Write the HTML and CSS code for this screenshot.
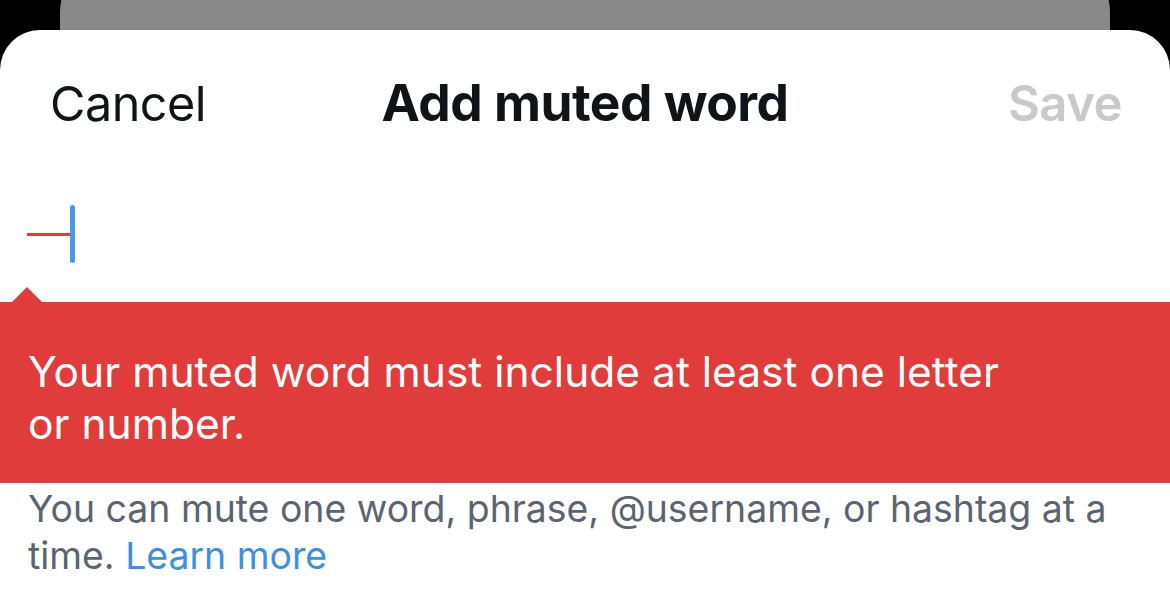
FILE: index.html
```html
<!DOCTYPE html>
<html>
<head>
<meta charset="utf-8">
<link rel="stylesheet" href="styles.css">
</head>
<body>
<div class="screen">
  <div class="back-card"></div>
  <div class="sheet">
    <div class="header">
      <span class="cancel">Cancel</span>
      <span class="title">Add muted word</span>
      <span class="save">Save</span>
    </div>
    <div class="input-row">
      <span class="dash"></span><span class="caret"></span>
    </div>
    <div class="error">
      <span class="arrow"></span>
      <p class="error-text">Your muted word must include at least one letter<br>or number.</p>
    </div>
    <p class="help">You can mute one word, phrase, @username, or hashtag at a time. <span class="link">Learn more</span></p>
  </div>
</div>
</body>
</html>
```

FILE: styles.css
```css
html, body {
  margin: 0;
  padding: 0;
  background: #000;
}
.screen {
  width: 1170px;
  height: 589px;
  overflow: hidden;
  position: relative;
  background: #000;
  font-family: Inter, "Noto Sans", sans-serif;
}
.back-card {
  position: absolute;
  left: 60px;
  right: 60px;
  top: -40px;
  height: 120px;
  background: #898989;
  border-radius: 52px;
}
.sheet {
  position: absolute;
  left: 0;
  right: 0;
  top: 30px;
  bottom: 0;
  background: #fff;
  border-radius: 40px 40px 0 0;
}
.header {
  display: grid;
  grid-template-columns: 1fr auto 1fr;
  align-items: baseline;
  padding: 41px 48px 0 50px;
  height: 99px;
}
.cancel {
  justify-self: start;
  font-size: 48.5px;
  color: #0f1419;
  letter-spacing: -0.5px;
}
.title {
  font-size: 51.5px;
  font-weight: 700;
  color: #0f1419;
  letter-spacing: -0.5px;
  position: relative;
  left: -1px;
}
.save {
  justify-self: end;
  font-size: 49px;
  font-weight: 600;
  color: #c9c9c9;
  letter-spacing: -0.5px;
}
.input-row {
  display: flex;
  align-items: center;
  padding-left: 27px;
  height: 128px;
}
.dash {
  width: 43px;
  height: 3px;
  background: #d9403f;
}
.caret {
  width: 5px;
  height: 58px;
  background: #4a98e6;
  border-radius: 3px;
}
.error {
  position: relative;
  background: #e03c3b;
  height: 181px;
  margin-top: 4px;
  box-sizing: border-box;
  padding: 44px 0 0 28px;
}
.arrow {
  position: absolute;
  left: 12px;
  top: -15px;
  width: 0;
  height: 0;
  border-left: 15px solid transparent;
  border-right: 15px solid transparent;
  border-bottom: 15px solid #e03c3b;
}
.error-text {
  margin: 0;
  color: #fff;
  font-size: 42.5px;
  line-height: 52px;
}
.help {
  margin: 0;
  padding: 2px 40px 0 28px;
  color: #5b6470;
  font-size: 37.4px;
  line-height: 47px;
}
.link {
  color: #3d90e0;
}
```
